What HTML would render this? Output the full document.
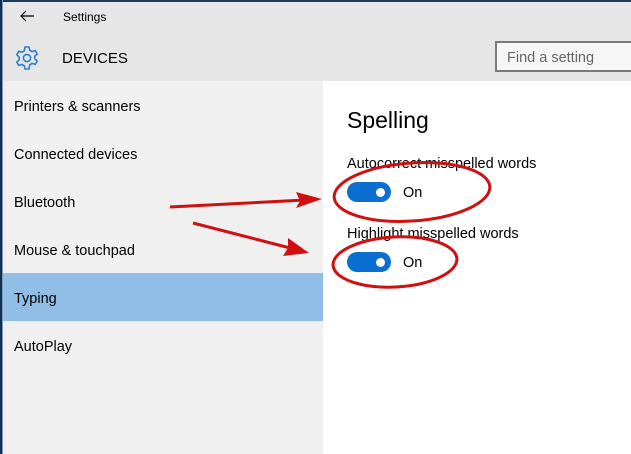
<!DOCTYPE html>
<html><head><meta charset="utf-8"><style>
*{margin:0;padding:0;box-sizing:border-box}
body{width:631px;height:454px;overflow:hidden;position:relative;background:#fff;font-family:"Liberation Sans",sans-serif;color:#000}
.abs{position:absolute}
.nav{font-size:14.5px;left:14px}
</style></head><body>
<div class="abs" style="left:0;top:0;width:631px;height:81px;background:#e6e6e6"></div>
<div class="abs" style="left:0;top:0;width:631px;height:2px;background:#1a3a5c"></div>
<div class="abs" style="left:0;top:81px;width:323px;height:373px;background:#f0f0f0"></div>
<div class="abs" style="left:0;top:0;width:2px;height:454px;background:#12304f"></div>
<div class="abs" style="left:2px;top:0;width:1px;height:454px;background:#7f9bb5"></div>
<div class="abs" style="left:3px;top:273px;width:320px;height:48px;background:#90bee6"></div>
<svg class="abs" style="left:19px;top:9px" width="16" height="14" viewBox="0 0 16 14"><path d="M15 7H2M7 2L2 7l5 5" stroke="#000" stroke-width="1.2" fill="none"/></svg>
<div class="abs" style="left:63px;top:10px;font-size:12px">Settings</div>
<svg class="abs" style="left:14px;top:45px" width="26" height="26" viewBox="0 0 26 26"><g fill="none" stroke="#2a7fd4" stroke-width="1.6"><path d="M11 2h4l.7 3.2 2.4 1.4 3.1-1 2 3.4-2.4 2.2v2.6l2.4 2.2-2 3.4-3.1-1-2.4 1.4L15 24h-4l-.7-3.2-2.4-1.4-3.1 1-2-3.4 2.4-2.2v-2.6L2.8 9.6l2-3.4 3.1 1 2.4-1.4z"/><circle cx="13" cy="13" r="3.6"/></g></svg>
<div class="abs" style="left:62px;top:50px;font-size:15px">DEVICES</div>
<div class="abs" style="left:495px;top:41px;width:140px;height:31px;border:2px solid #7a7a7a;background:#f6f6f6;font-size:14.5px;color:#666;padding:7px 0 0 10px">Find a setting</div>
<div class="abs nav" style="top:99px">Printers &amp; scanners</div>
<div class="abs nav" style="top:147px">Connected devices</div>
<div class="abs nav" style="top:195px">Bluetooth</div>
<div class="abs nav" style="top:243px">Mouse &amp; touchpad</div>
<div class="abs nav" style="top:291px">Typing</div>
<div class="abs nav" style="top:339px">AutoPlay</div>
<div class="abs" style="left:347px;top:107px;font-size:23px">Spelling</div>
<div class="abs" style="left:347px;top:156px;font-size:14.5px">Autocorrect misspelled words</div>
<div class="abs" style="left:347px;top:226px;font-size:14.5px">Highlight misspelled words</div>
<div class="abs" style="left:347px;top:182px;width:44px;height:20px;border-radius:10px;background:#0a6fd0"></div>
<div class="abs" style="left:376px;top:188px;width:9px;height:9px;border-radius:50%;background:#fff"></div>
<div class="abs" style="left:403px;top:185px;font-size:14.5px">On</div>
<div class="abs" style="left:347px;top:252px;width:44px;height:20px;border-radius:10px;background:#0a6fd0"></div>
<div class="abs" style="left:376px;top:258px;width:9px;height:9px;border-radius:50%;background:#fff"></div>
<div class="abs" style="left:403px;top:255px;font-size:14.5px">On</div>
<svg class="abs" style="left:0;top:0" width="631" height="454"><g fill="none" stroke="#d01010" stroke-width="3">
<ellipse cx="412" cy="192" rx="78" ry="29" transform="rotate(-4 412 192)"/>
<ellipse cx="395" cy="262" rx="62" ry="25" transform="rotate(-3 395 262)"/>
<path d="M170 207L305 200"/><path d="M193 223L290 248"/></g>
<g fill="#d01010"><path d="M322 199L296 192L300 201L296 208z"/><path d="M309 253L288 238L288 248L283 256z"/></g></svg>
</body></html>
